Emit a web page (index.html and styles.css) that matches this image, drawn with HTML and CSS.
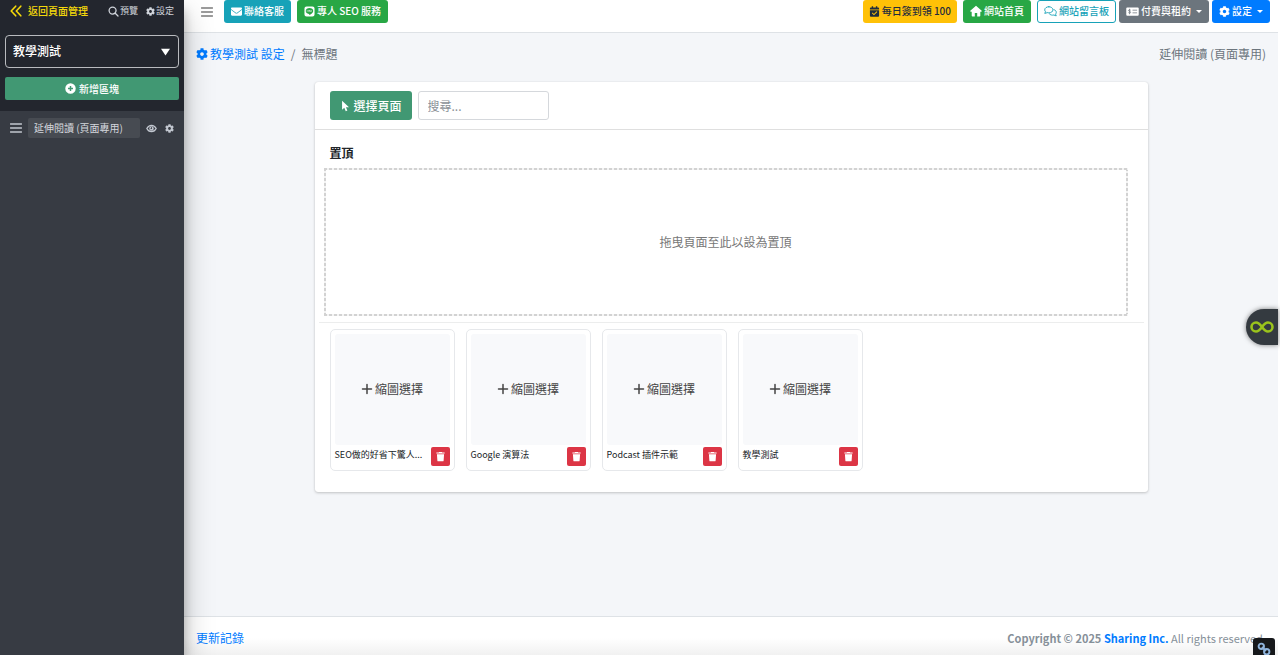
FILE: index.html
```html
<!DOCTYPE html>
<html lang="zh-Hant">
<head>
<meta charset="utf-8">
<meta name="viewport" content="width=device-width, initial-scale=1">
<title>教學測試 設定</title>
<link rel="stylesheet" href="styles.css">
</head>
<body>
<svg class="sprite" aria-hidden="true">
  <symbol id="i-cog" viewBox="0 0 512 512"><path d="M487.4 315.7l-42.6-24.6c4.3-23.2 4.3-47 0-70.2l42.6-24.6c4.9-2.8 7.1-8.6 5.5-14-11.1-35.6-30-67.8-54.7-94.6-3.8-4.1-10-5.1-14.8-2.3L380.8 110c-17.9-15.4-38.5-27.3-60.8-35.1V25.8c0-5.6-3.9-10.5-9.4-11.7-36.7-8.2-74.3-7.8-109.2 0-5.5 1.2-9.4 6.1-9.4 11.7V75c-22.2 7.9-42.8 19.8-60.8 35.1L88.7 85.5c-4.9-2.8-11-1.9-14.8 2.3-24.7 26.7-43.6 58.9-54.7 94.6-1.7 5.4.6 11.2 5.5 14L67.3 221c-4.3 23.2-4.3 47 0 70.2l-42.6 24.6c-4.9 2.8-7.1 8.6-5.5 14 11.1 35.6 30 67.8 54.7 94.6 3.8 4.1 10 5.1 14.8 2.3l42.6-24.6c17.9 15.4 38.5 27.3 60.8 35.1v49.2c0 5.6 3.9 10.5 9.4 11.7 36.7 8.2 74.3 7.8 109.2 0 5.5-1.2 9.4-6.1 9.4-11.7v-49.2c22.2-7.9 42.8-19.8 60.8-35.1l42.6 24.6c4.9 2.8 11 1.9 14.8-2.3 24.7-26.7 43.6-58.9 54.7-94.6 1.5-5.5-.7-11.3-5.6-14.1zM256 336c-44.1 0-80-35.9-80-80s35.9-80 80-80 80 35.9 80 80-35.9 80-80 80z"/></symbol>
  <symbol id="i-mail" viewBox="0 0 512 512"><path d="M502.3 190.8c3.9-3.1 9.7-.2 9.7 4.7V400c0 26.5-21.5 48-48 48H48c-26.5 0-48-21.5-48-48V195.6c0-5 5.7-7.8 9.7-4.7 22.4 17.4 52.1 39.5 154.1 113.6 21.1 15.4 56.7 47.8 92.2 47.6 35.7.3 72-32.8 92.3-47.6 102-74.1 131.6-96.3 154-113.7zM256 320c23.2.4 56.6-29.2 73.4-41.4 132.7-96.3 142.8-104.7 173.4-128.7 5.8-4.5 9.2-11.5 9.2-18.9v-19c0-26.5-21.5-48-48-48H48c-26.5 0-48 21.5-48 48v19c0 7.4 3.4 14.3 9.2 18.9 30.6 23.9 40.7 32.4 173.4 128.7 16.8 12.2 50.2 41.8 73.4 41.4z"/></symbol>
  <symbol id="i-chevrons" viewBox="0 0 12 12"><path d="M5.7 1.2 1.2 6l4.5 4.8M10.8 1.2 6.3 6l4.5 4.8" fill="none" stroke="currentColor" stroke-width="1.6" stroke-linecap="round" stroke-linejoin="round"/></symbol>
  <symbol id="i-search" viewBox="0 0 12 12"><path d="M5 1.2a3.8 3.8 0 1 0 0 7.6 3.8 3.8 0 0 0 0-7.6M7.9 7.9l3 3" fill="none" stroke="currentColor" stroke-width="1.4" stroke-linecap="round"/></symbol>
  <symbol id="i-plus-circle" viewBox="0 0 12 12"><path fill-rule="evenodd" d="M6 .3a5.7 5.7 0 1 0 0 11.4A5.7 5.7 0 0 0 6 .3zM5.2 3.3h1.6v1.9h1.9v1.6H6.8v1.9H5.2V6.8H3.3V5.2h1.9z"/></symbol>
  <symbol id="i-bars" viewBox="0 0 12 12"><path d="M.5 2h11M.5 6h11M.5 10h11" stroke="currentColor" stroke-width="1.5" stroke-linecap="round"/></symbol>
  <symbol id="i-eye" viewBox="0 0 12 12"><path d="M.9 6C3.2 1.4 8.8 1.4 11.1 6 8.8 10.6 3.2 10.6.9 6z" fill="none" stroke="currentColor" stroke-width="1.4"/><path fill-rule="evenodd" d="M6 3.5A2.5 2.5 0 1 0 6 8.500 2.500 2.500 0 0 0 6 3.500zM5.500 4.500a1.100 1.100 0 1 1-1 1.500c.8.1 1.200-.5 1-1.500z"/></symbol>
  <symbol id="i-line" viewBox="0 0 12 12"><path fill-rule="evenodd" d="M2.800.5h6.400a2.300 2.300 0 0 1 2.300 2.300v6.400a2.300 2.300 0 0 1-2.300 2.300H2.800A2.300 2.300 0 0 1 .5 9.200V2.800A2.300 2.300 0 0 1 2.800.5zM6 2.200C3.700 2.200 1.900 3.600 1.900 5.400c0 1.700 1.400 2.900 3.400 3.200.5.100.400.5.300 1.300 1.800-.9 4.500-2.600 4.500-4.500C10.100 3.600 8.300 2.200 6 2.200z"/><path d="M3.400 4.600v1.600M4.700 4.600v1.600M5.700 6.200V4.600l1.200 1.600V4.600M8.200 4.600v1.600" fill="none" stroke="currentColor" stroke-width=".6"/></symbol>
  <symbol id="i-calendar" viewBox="0 0 12 12"><path d="M1 3.700V2.500C1 1.900 1.400 1.500 2 1.500h1V.4h1.500v1.100h3V.4H9v1.100h1c.6 0 1 .4 1 1v1.200z"/><path fill-rule="evenodd" d="M1 4.500h10v6.200c0 .6-.4 1-1 1H2c-.6 0-1-.4-1-1zM8.300 5.700 5.400 8.600 3.900 7.100l-.8.8 2.300 2.300 3.700-3.700z"/></symbol>
  <symbol id="i-home" viewBox="0 0 12 12"><path d="M6 .8 12 6l-.8.8h-.9v3.900c0 .4-.3.7-.7.700H7.200V8H4.800v3.400H2.400c-.4 0-.7-.3-.7-.7V6.800H.8L0 6z"/></symbol>
  <symbol id="i-chat" viewBox="0 0 14 12"><path d="M5.200.8C2.700.8.7 2.300.7 4.200c0 .8.3 1.500.9 2.100L.7 8c1 0 1.900-.3 2.600-.8.6.2 1.200.3 1.900.3 2.500 0 4.500-1.500 4.500-3.300S7.700.8 5.200.8zM10.800 4c1.500.4 2.500 1.500 2.500 2.900 0 .7-.3 1.400-.8 2l.8 1.800c-1-.1-1.800-.4-2.500-.9-2 .5-4 0-5-1.200" fill="none" stroke="currentColor" stroke-width="1" stroke-linejoin="round" stroke-linecap="round"/></symbol>
  <symbol id="i-bill" viewBox="0 0 14 12"><path fill-rule="evenodd" d="M1.200 1.500h11.600c.6 0 1 .4 1 1v7c0 .6-.4 1-1 1H1.200c-.6 0-1-.4-1-1v-7c0-.6.4-1 1-1zM7 4v1h5V4zM7 7v1h5V7z"/><path class="bill-mark" d="M5 4.600C4.200 3.900 2.500 4 2.600 5c.1 1 2.400.7 2.400 1.800 0 1-1.600 1.100-2.500.4M3.800 3v6" fill="none" stroke-width=".8"/></symbol>
  <symbol id="i-pointer" viewBox="0 0 10 14"><path d="M1 .8v10.600l2.600-2.300 1.700 3.900 1.900-.8-1.700-3.800h3.600z"/></symbol>
  <symbol id="i-plus" viewBox="0 0 12 12"><path d="M6 1.500v9M1.500 6h9" stroke="currentColor" stroke-width="1.500" stroke-linecap="round"/></symbol>
  <symbol id="i-trash" viewBox="0 0 12 12"><path d="M4.500 1 4.100 1.600H1.500v1.200h9V1.600H7.900L7.500 1zM2.100 3.500l.5 7c0 .4.400.8.900.8h5c.5 0 .9-.4.9-.8l.5-7z"/></symbol>
  <symbol id="i-infinity" viewBox="0 0 24 14"><path d="M12 7C9.500 3.500 8 2.500 6 2.500a4.500 4.500 0 0 0 0 9c2 0 3.500-1 6-4.500s4-4.500 6-4.500a4.500 4.500 0 0 1 0 9c-2 0-3.500-1-6-4.500z" fill="none" stroke="currentColor" stroke-width="2.600"/></symbol>
  <symbol id="i-link" viewBox="0 0 14 14"><g fill="none" stroke="currentColor" stroke-width="1.900"><circle cx="4.300" cy="4.300" r="2.700"/><circle cx="9.700" cy="9.700" r="2.700"/><path d="m5 5 4 4"/></g></symbol>
</svg>

<div class="app">
  <aside class="sidebar">
    <div class="sidebar-head">
      <div class="sidebar-links">
        <a class="back" href="#"><svg class="icon-l"><use href="#i-chevrons"/></svg>返回頁面管理</a>
        <a class="mini" href="#"><svg class="icon-m"><use href="#i-search"/></svg>預覽</a>
        <a class="mini" href="#"><svg class="icon-s"><use href="#i-cog"/></svg>設定</a>
      </div>
      <div class="select-wrap">
        <select aria-label="頁面"><option>教學測試</option></select>
        <svg class="caret-big" viewBox="0 0 10 8"><path d="M0 .5h10L5 8z"/></svg>
      </div>
      <button class="add" type="button"><svg class="icon-m"><use href="#i-plus-circle"/></svg>新增區塊</button>
    </div>
    <div class="block-row">
      <svg class="icon-l"><use href="#i-bars"/></svg>
      <input class="block-name" type="text" aria-label="區塊名稱" value="延伸閱讀 (頁面專用)">
      <button class="plain" type="button" aria-label="顯示"><svg class="icon-m"><use href="#i-eye"/></svg></button>
      <button class="plain" type="button" aria-label="區塊設定"><svg class="icon-s"><use href="#i-cog"/></svg></button>
    </div>
  </aside>

  <div class="page">
    <nav class="topbar">
      <button class="plain menu" type="button" aria-label="選單"><svg class="icon-l"><use href="#i-bars"/></svg></button>
      <a class="btn teal" href="#"><svg class="icon-m"><use href="#i-mail"/></svg>聯絡客服</a>
      <a class="btn green" href="#"><svg class="icon-m"><use href="#i-line"/></svg>專人 SEO 服務</a>
      <span class="spacer"></span>
      <a class="btn yellow" href="#"><svg class="icon-m"><use href="#i-calendar"/></svg>每日簽到領 100</a>
      <a class="btn green" href="#"><svg class="icon-l"><use href="#i-home"/></svg>網站首頁</a>
      <div class="btn-group">
        <a class="btn outline" href="#"><svg class="icon-w"><use href="#i-chat"/></svg>網站留言板</a>
        <button class="btn gray" type="button"><svg class="icon-w"><use href="#i-bill"/></svg>付費與租約<i class="caret"></i></button>
        <button class="btn blue" type="button"><svg class="icon-m"><use href="#i-cog"/></svg>設定<i class="caret"></i></button>
      </div>
    </nav>

    <main class="content">
      <header class="crumbs">
        <a href="#"><svg class="icon-l"><use href="#i-cog"/></svg>教學測試 設定</a>
        <span class="sep">/</span>
        <span>無標題</span>
        <span class="spacer"></span>
        <span>延伸閱讀 (頁面專用)</span>
      </header>

      <section class="panel">
        <div class="panel-head">
          <button class="pick" type="button"><svg class="icon-p"><use href="#i-pointer"/></svg>選擇頁面</button>
          <input class="search" type="text" aria-label="搜尋" placeholder="搜尋...">
        </div>
        <h2>置頂</h2>
        <div class="drop">拖曳頁面至此以設為置頂</div>
        <hr>
        <div class="cards">
          <article class="card">
            <button class="thumb" type="button"><svg class="icon-l"><use href="#i-plus"/></svg>縮圖選擇</button>
            <div class="card-foot"><span class="name">SEO做的好省下驚人...</span><button class="del" type="button" aria-label="刪除"><svg class="icon-m"><use href="#i-trash"/></svg></button></div>
          </article>
          <article class="card">
            <button class="thumb" type="button"><svg class="icon-l"><use href="#i-plus"/></svg>縮圖選擇</button>
            <div class="card-foot"><span class="name">Google 演算法</span><button class="del" type="button" aria-label="刪除"><svg class="icon-m"><use href="#i-trash"/></svg></button></div>
          </article>
          <article class="card">
            <button class="thumb" type="button"><svg class="icon-l"><use href="#i-plus"/></svg>縮圖選擇</button>
            <div class="card-foot"><span class="name">Podcast 插件示範</span><button class="del" type="button" aria-label="刪除"><svg class="icon-m"><use href="#i-trash"/></svg></button></div>
          </article>
          <article class="card">
            <button class="thumb" type="button"><svg class="icon-l"><use href="#i-plus"/></svg>縮圖選擇</button>
            <div class="card-foot"><span class="name">教學測試</span><button class="del" type="button" aria-label="刪除"><svg class="icon-m"><use href="#i-trash"/></svg></button></div>
          </article>
        </div>
      </section>
    </main>

    <footer class="footer">
      <a href="#">更新記錄</a>
      <span class="copyright"><strong>Copyright © 2025 <a href="#">Sharing Inc.</a></strong> All rights reserved.</span>
    </footer>
  </div>
</div>

<button class="float-tab" type="button" aria-label="工具"><svg class="icon-inf"><use href="#i-infinity"/></svg></button>
<button class="float-link" type="button" aria-label="連結"><svg class="icon-link"><use href="#i-link"/></svg></button>
</body>
</html>
```
FILE: styles.css
```css
* { box-sizing: border-box; }

body {
  margin: 0;
  padding-right: 2px;
  background: #fff;
  color: #212529;
  font: 12px/18px "Noto Sans CJK TC", "Noto Sans", sans-serif;
}

button, input, select { font: inherit; margin: 0; }
button { border: 0; cursor: pointer; }
a { color: #007bff; text-decoration: none; }
svg { fill: currentColor; flex: none; }

.sprite { position: absolute; width: 0; height: 0; }
.icon-s { width: 9px; height: 9px; }
.icon-m { width: 11px; height: 11px; }
.icon-l { width: 12px; height: 12px; }
.icon-w { width: 13px; height: 11px; }
.icon-p { width: 9px; height: 12px; }
.icon-inf { width: 24px; height: 14px; }
.icon-link { width: 14px; height: 14px; }
.spacer { flex: 1; }

.app { display: flex; min-height: 100vh; }

/* Sidebar */
.sidebar {
  position: relative;
  z-index: 2;
  flex: none;
  width: 184px;
  background: #373b43;
  color: #c2c7d0;
  box-shadow: 0 14px 28px rgba(0, 0, 0, .25), 0 10px 10px rgba(0, 0, 0, .22);
}
.sidebar-head { padding: 2px 5px 11px; background: #23262e; }
.sidebar-links { display: flex; align-items: center; gap: 8px; height: 18px; padding: 0 5px; }
.sidebar-links a { display: flex; align-items: center; }
.sidebar-links .back { gap: 6px; margin-right: auto; color: #f5d90a; font-size: 10px; font-weight: 500; }
.sidebar-links .mini { gap: 1px; color: #d0d4db; font-size: 9px; }

.select-wrap { position: relative; margin: 15px 0 9px; }
.select-wrap select {
  display: block;
  width: 100%;
  height: 33px;
  padding: 0 7px 1px;
  appearance: none;
  border: 1px solid #b9bbbf;
  border-radius: 4px;
  background: #23262e;
  color: #fff;
  font-weight: 500;
}
.caret-big { position: absolute; top: 13px; right: 9px; width: 9px; height: 8px; color: #fff; pointer-events: none; }

.add {
  display: flex;
  align-items: center;
  justify-content: center;
  gap: 3px;
  width: 100%;
  height: 23px;
  border-radius: 2px;
  background: #419873;
  color: #fff;
  font-size: 10px;
  font-weight: 500;
}

.block-row { display: flex; align-items: center; padding: 7px 10px; }
.block-name {
  flex: 1;
  min-width: 0;
  height: 20px;
  margin: 0 6px;
  padding: 0 6px 1px;
  border: 0;
  border-radius: 2px;
  background: #474b52;
  color: #d3d6dc;
  font-size: 10px;
}
.plain { display: flex; padding: 0; background: none; color: inherit; }
.block-row .plain + .plain { margin-left: 8px; }

/* Top bar */
.page { display: flex; flex: 1; flex-direction: column; min-width: 0; background: #f4f6f9; }
.topbar {
  display: flex;
  align-items: flex-start;
  gap: 6px;
  height: 33px;
  padding: 0 8px 0 17px;
  border-bottom: 1px solid #dee2e6;
  background: #fff;
}
.menu { height: 23px; margin-right: 5px; align-items: center; color: #7b7b7b; }
.btn-group { display: flex; gap: 3px; }
.btn {
  display: flex;
  align-items: center;
  gap: 2px;
  height: 23px;
  padding: 0 6px 1px;
  border: 1px solid transparent;
  border-radius: 3px;
  color: #fff;
  font-size: 10px;
  font-weight: 500;
  white-space: nowrap;
}
.teal { background: #17a2b8; }
.green { background: #28a745; }
.yellow { padding: 0 5px 1px; background: #ffc107; color: #1f2d3d; }
.outline { border-color: #17a2b8; color: #17a2b8; }
.gray { background: #6c757d; }
.blue { background: #007bff; }
.bill-mark { stroke: #6c757d; }
.caret { margin-left: 3px; border: 3px solid transparent; border-top-color: currentColor; border-bottom: 0; }

/* Content */
.content { flex: 1; padding: 12px; }
.crumbs { display: flex; align-items: center; color: #6c757d; }
.crumbs a { display: flex; align-items: center; gap: 2px; }
.sep { margin: 0 6px; }

.panel {
  max-width: 833px;
  margin: 19px auto 0;
  padding-bottom: 21px;
  border-radius: 3px;
  background: #fff;
  box-shadow: 0 0 1px rgba(0, 0, 0, .13), 0 1px 3px rgba(0, 0, 0, .2);
}
.panel-head { display: flex; gap: 6px; padding: 9px 15px; border-bottom: 1px solid #dfdfdf; }
.pick {
  display: flex;
  align-items: center;
  gap: 4px;
  height: 29px;
  padding: 0 10px 0 11px;
  border-radius: 3px;
  background: #419873;
  color: #fff;
  font-weight: 500;
}
.search { width: 131px; height: 29px; padding: 0 9px; border: 1px solid #d5d8dc; border-radius: 3px; }
.search::placeholder { color: #8b9197; }
.panel h2 { margin: 14px 15px 6px; font-size: 12px; line-height: 18px; font-weight: 700; }
.drop {
  --dash: #d2d2d2 0 3px, #f4f4f4 3px 5px;
  display: flex;
  align-items: center;
  justify-content: center;
  height: 148px;
  margin: 0 20px 0 9px;
  background:
    repeating-linear-gradient(90deg, var(--dash)) top / 100% 2px no-repeat,
    repeating-linear-gradient(90deg, var(--dash)) bottom / 100% 2px no-repeat,
    repeating-linear-gradient(var(--dash)) left / 2px 100% no-repeat,
    repeating-linear-gradient(var(--dash)) right / 2px 100% no-repeat;
  color: #777;
}
.panel hr { margin: 6px 4px; border: 0; border-top: 1px solid #eceded; }
.cards { display: flex; flex-wrap: wrap; gap: 11px; padding: 0 15px; }
.card { width: 125px; padding: 4px; border: 1px solid #e6e8eb; border-radius: 5px; }
.thumb {
  display: flex;
  align-items: center;
  justify-content: center;
  gap: 2px;
  width: 100%;
  height: 111px;
  padding: 0 0 2px;
  border-radius: 3px;
  background: #f8f9fb;
  color: #444;
}
.card-foot { display: flex; gap: 3px; padding: 2px 0 0; }
.name { flex: 1; min-width: 0; font-size: 9px; line-height: 16px; white-space: nowrap; }
.del {
  display: flex;
  align-items: center;
  justify-content: center;
  width: 19px;
  height: 19px;
  padding: 0;
  border-radius: 2px;
  background: #dc3545;
  color: #fff;
}

/* Footer */
.footer {
  display: flex;
  justify-content: space-between;
  padding: 12px 12px 8px;
  border-top: 1px solid #dee2e6;
  background: linear-gradient(#fff 55%, #f1f1f1);
  color: #869099;
}
.copyright { font-size: 11px; }

/* Floating tools */
.float-tab {
  position: fixed;
  top: 309px;
  right: 2px;
  display: flex;
  align-items: center;
  justify-content: center;
  width: 32px;
  height: 36px;
  padding: 0;
  border-radius: 18px 0 0 18px;
  background: #343a40;
  color: #9ac31c;
  box-shadow: 0 0 5px rgba(0, 0, 0, .5);
}
.float-link {
  position: fixed;
  right: 5px;
  bottom: -5px;
  z-index: 3;
  width: 22px;
  height: 22px;
  padding: 4px;
  border-radius: 3px;
  background: #16181b;
  color: #8fb4dc;
}
.float-link svg { display: block; }
```
